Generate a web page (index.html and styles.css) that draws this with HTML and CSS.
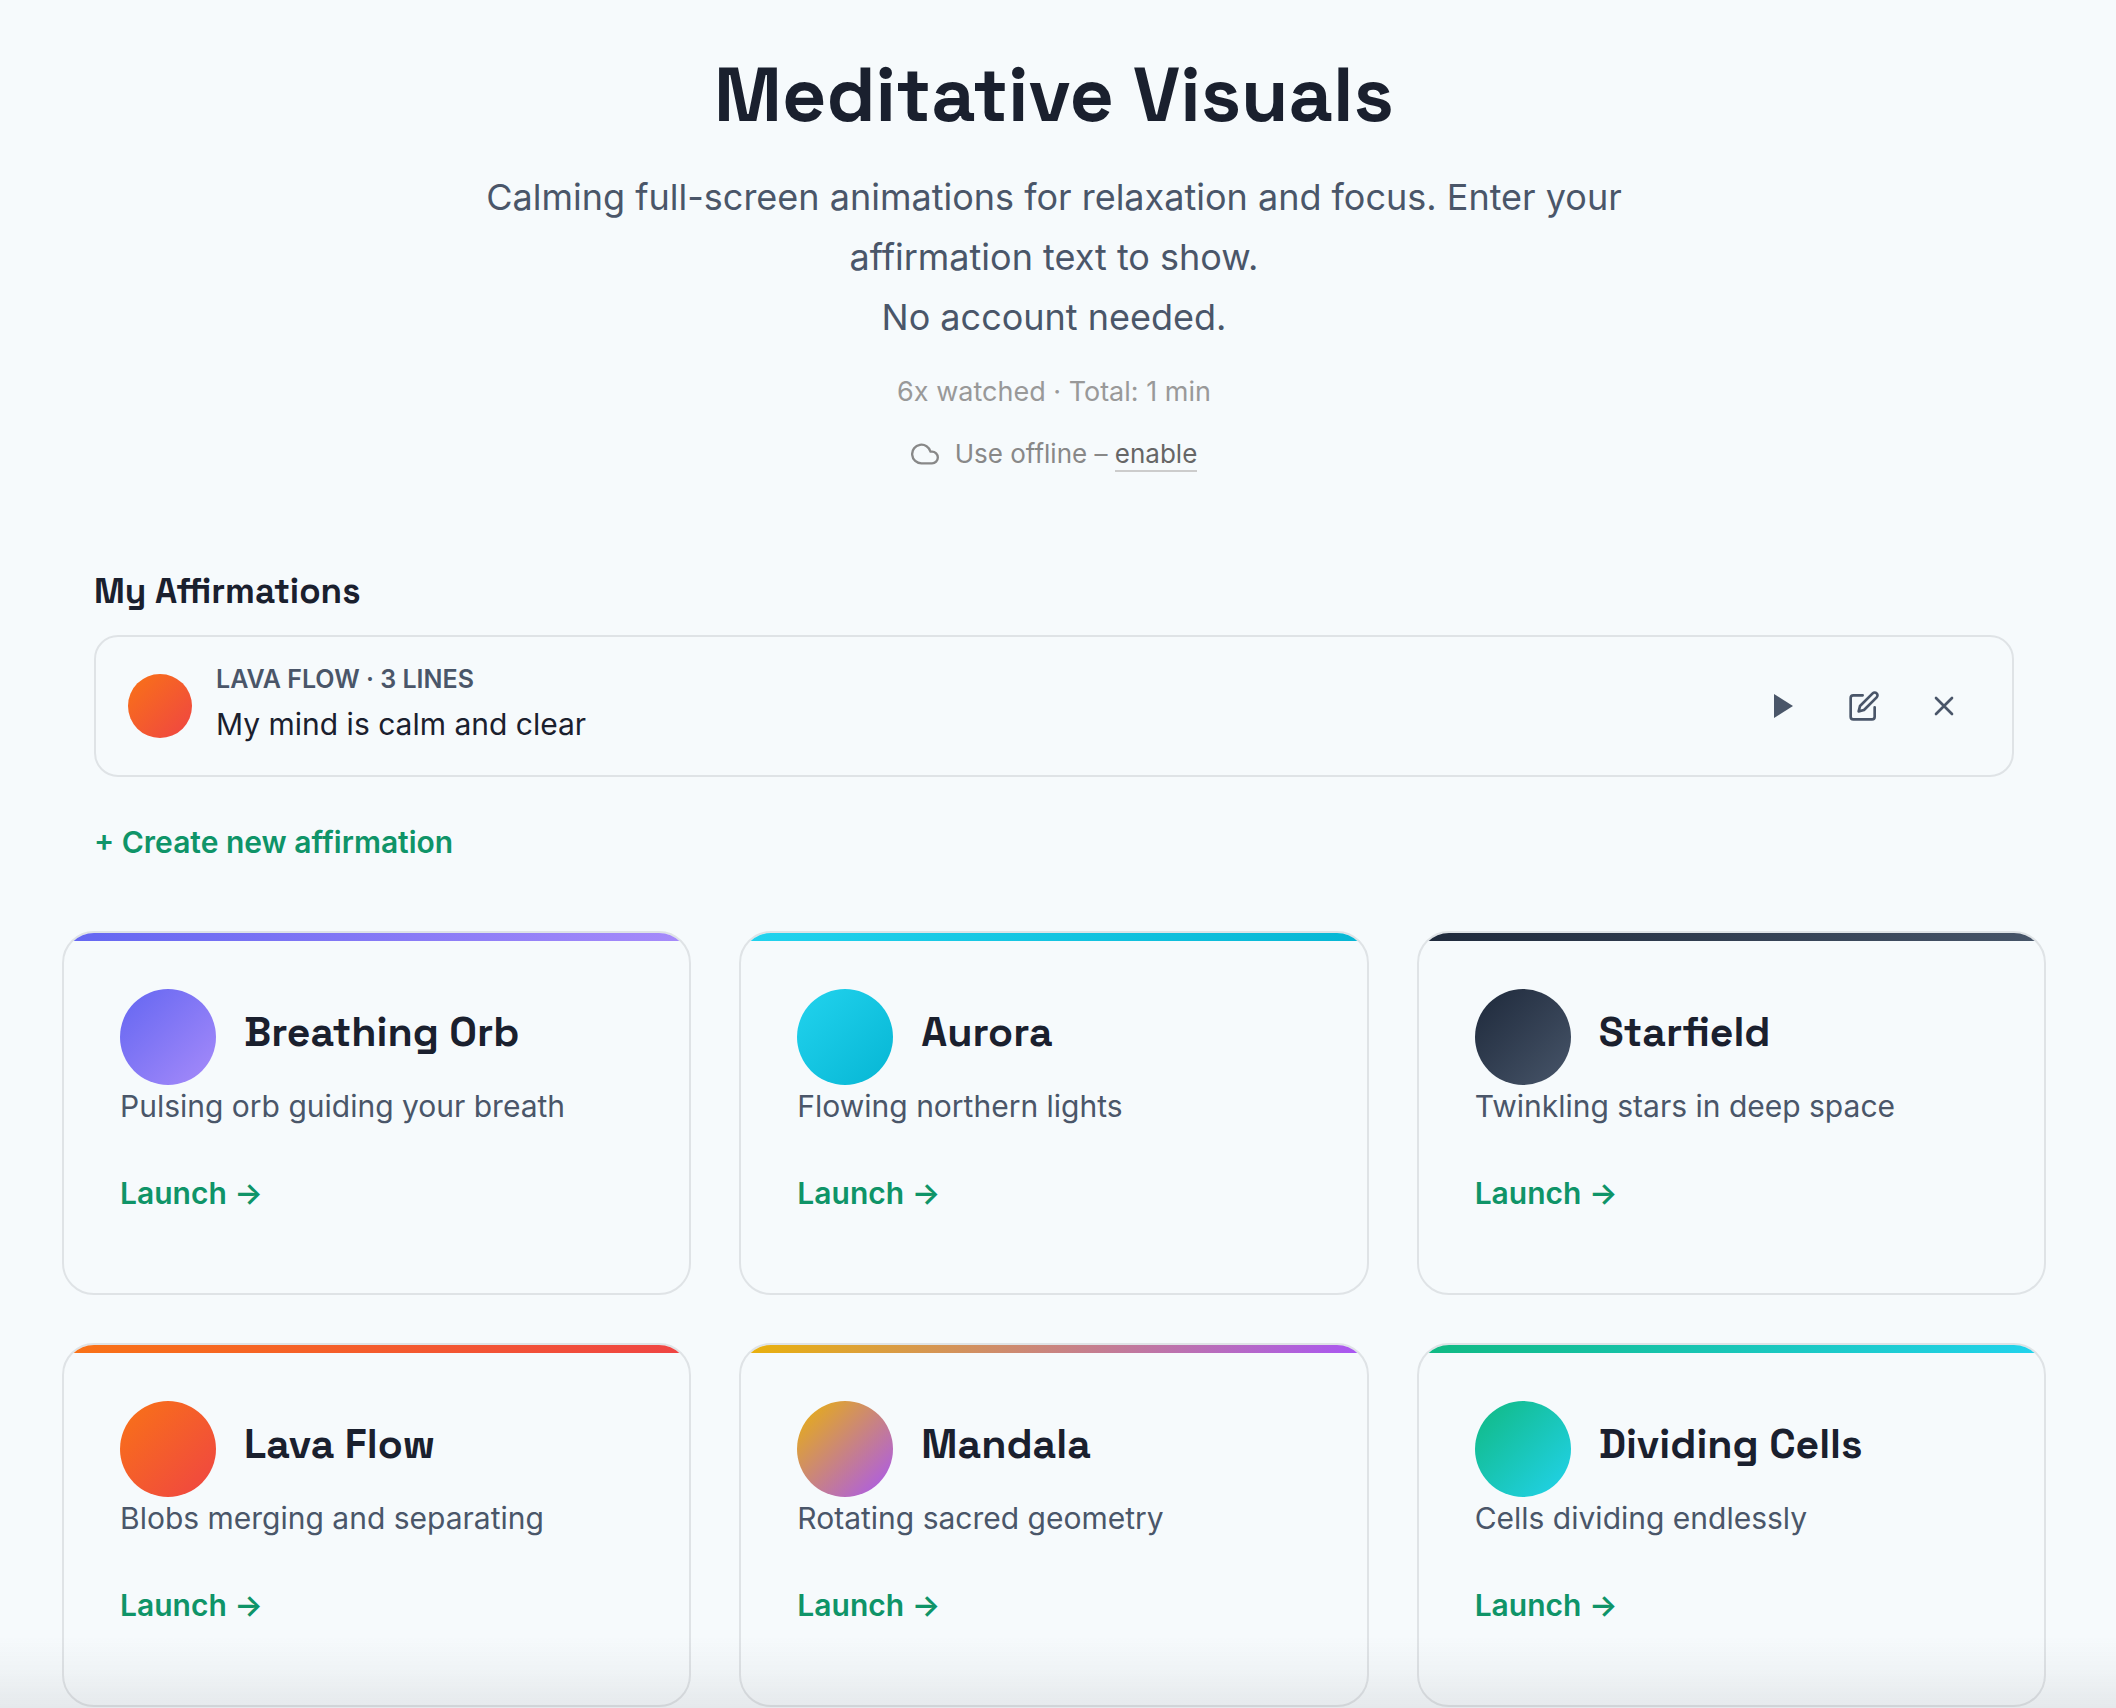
FILE: index.html
```html
<!DOCTYPE html>
<html lang="en">
<head>
  <meta charset="utf-8" />
  <meta name="viewport" content="width=device-width, initial-scale=1" />
  <title>Meditative Visuals</title>
  <link rel="stylesheet" href="styles.css">
</head>
<body>
  <header class="hero">
    <h1>Meditative Visuals</h1>
    <p class="lead">Calming full-screen animations for relaxation and focus. Enter your affirmation text to show.<br>No account needed.</p>
    <p class="stats">6x watched · Total: 1 min</p>
    <div class="offline">
      <svg class="cloud" viewBox="0 0 24 24" aria-hidden="true"><path d="M18 10h-1.26A8 8 0 1 0 9 20h9a5 5 0 0 0 0-10z"/></svg>
      <span>Use offline – <button class="enable" type="button">enable</button></span>
    </div>
  </header>

  <section class="affirmations">
    <h2>My Affirmations</h2>
    <div class="affirmation">
      <span class="dot lava"></span>
      <div class="info">
        <div class="meta">Lava Flow · 3 lines</div>
        <div class="text">My mind is calm and clear</div>
      </div>
      <div class="actions">
        <button type="button" aria-label="Play">
          <svg viewBox="0 0 32 32"><path class="solid" d="M6 4l19 12-19 12z"/></svg>
        </button>
        <button type="button" aria-label="Edit">
          <svg viewBox="0 0 24 24"><path d="M11 4H4a2 2 0 0 0-2 2v14a2 2 0 0 0 2 2h14a2 2 0 0 0 2-2v-7"/><path d="M18.5 2.5a2.121 2.121 0 0 1 3 3L12 15l-4 1 1-4 9.5-9.5z"/></svg>
        </button>
        <button type="button" aria-label="Delete">
          <svg viewBox="0 0 24 24"><path d="M18 6L6 18M6 6l12 12"/></svg>
        </button>
      </div>
    </div>
    <button class="create" type="button">+ Create new affirmation</button>
  </section>

  <main class="grid">
    <article class="card">
      <div class="bar orb"></div>
      <div class="head"><span class="icon orb"></span><h3>Breathing Orb</h3></div>
      <p>Pulsing orb guiding your breath</p>
      <a class="launch" href="#orb">Launch →</a>
    </article>
    <article class="card">
      <div class="bar aurora"></div>
      <div class="head"><span class="icon aurora"></span><h3>Aurora</h3></div>
      <p>Flowing northern lights</p>
      <a class="launch" href="#aurora">Launch →</a>
    </article>
    <article class="card">
      <div class="bar stars"></div>
      <div class="head"><span class="icon stars"></span><h3>Starfield</h3></div>
      <p>Twinkling stars in deep space</p>
      <a class="launch" href="#starfield">Launch →</a>
    </article>
    <article class="card">
      <div class="bar lava"></div>
      <div class="head"><span class="icon lava"></span><h3>Lava Flow</h3></div>
      <p>Blobs merging and separating</p>
      <a class="launch" href="#lava">Launch →</a>
    </article>
    <article class="card">
      <div class="bar mandala"></div>
      <div class="head"><span class="icon mandala"></span><h3>Mandala</h3></div>
      <p>Rotating sacred geometry</p>
      <a class="launch" href="#mandala">Launch →</a>
    </article>
    <article class="card">
      <div class="bar cells"></div>
      <div class="head"><span class="icon cells"></span><h3>Dividing Cells</h3></div>
      <p>Cells dividing endlessly</p>
      <a class="launch" href="#cells">Launch →</a>
    </article>
  </main>
  <div class="fade"></div>
</body>
</html>
```
FILE: styles.css
```css
:root { --bg:#f6fafc; --text:#1a202e; --muted:#4a5669; --line:#dfe3e6; --accent:#0f9468; }
* { box-sizing: border-box; }
body { margin: 0; padding: 48px 8px 2px 0; font-family: Inter, "Liberation Sans", sans-serif; background: var(--bg); color: var(--text); font-size: 30px; line-height: 40px; }
h1, h2, h3, p { margin: 0; }
h1, h2, h3 { font-family: "Space Grotesk", Inter, sans-serif; font-weight: 700; }
button { font: inherit; color: inherit; background: none; border: 0; padding: 0; cursor: pointer; }
svg { fill: none; stroke: currentColor; stroke-width: 2; stroke-linecap: round; stroke-linejoin: round; }

.hero { max-width: 1200px; margin: 0 auto; text-align: center; }
h1 { font-size: 77px; line-height: 92px; }
.lead { margin-top: 27px; font-size: 36px; line-height: 60px; color: var(--muted); }
.stats { margin-top: 23px; font-size: 27px; line-height: 44px; color: #999; }
.offline { margin-top: 18px; display: flex; justify-content: center; align-items: center; gap: 16px; font-size: 26px; line-height: 44px; color: #888; }
.cloud { width: 28px; height: 28px; }
.enable { color: #666; line-height: 32px; border-bottom: 2px solid #ccc; }

.affirmations { max-width: 1920px; margin: 93px auto 0; }
h2 { font-size: 35px; line-height: 44px; }
.affirmation { display: flex; align-items: center; gap: 24px; margin-top: 22px; padding: 24px 32px; border: 2px solid var(--line); border-radius: 24px; }
.dot { width: 64px; height: 64px; border-radius: 50%; }
.info { flex: 1; }
.meta { font-size: 25px; line-height: 36px; font-weight: 600; text-transform: uppercase; color: var(--muted); }
.text { line-height: 54px; }
.actions { display: flex; gap: 8px; color: var(--muted); }
.actions button { width: 72px; height: 72px; display: flex; align-items: center; justify-content: center; }
.actions svg { width: 32px; height: 32px; }
.solid { fill: currentColor; stroke: none; }
.create { display: block; margin-top: 41px; line-height: 48px; font-weight: 600; color: var(--accent); }

.grid { display: grid; grid-template-columns: repeat(3, 1fr); gap: 48px; margin-top: 65px; padding: 0 62px; }
.card { border: 2px solid var(--line); border-radius: 32px; overflow: hidden; padding: 0 56px 80px; }
.bar { height: 8px; margin: 0 -56px 48px; }
.head { display: flex; align-items: center; gap: 28px; }
.icon { width: 96px; height: 96px; border-radius: 50%; }
h3 { font-size: 41px; line-height: 48px; padding-bottom: 10px; }
.card p { line-height: 42px; color: var(--muted); }
.launch { display: inline-block; margin-top: 46px; font-weight: 600; color: var(--accent); text-decoration: none; }

.orb { background: linear-gradient(135deg, #6366f1, #a78bfa); }
.aurora { background: linear-gradient(135deg, #22d3ee, #06b6d4); }
.stars { background: linear-gradient(135deg, #1e293b, #475569); }
.lava { background: linear-gradient(135deg, #f97316, #ef4444); }
.mandala { background: linear-gradient(135deg, #eab308, #a855f7); }
.cells { background: linear-gradient(135deg, #10b981, #22d3ee); }

/* soft shade along the bottom of the window */
.fade { position: fixed; left: 0; right: 0; bottom: 0; height: 72px; pointer-events: none; background: linear-gradient(to bottom, rgba(40,40,50,0), rgba(40,40,50,0.03) 50%, rgba(40,40,50,0.08)); }
```
